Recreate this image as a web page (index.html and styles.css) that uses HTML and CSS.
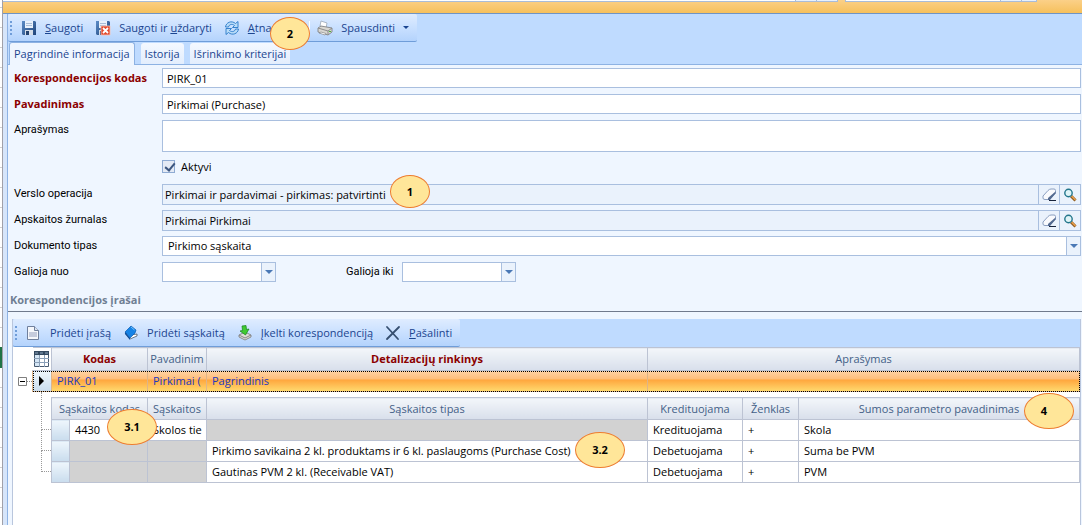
FILE: index.html
```html
<!DOCTYPE html>
<html lang="lt">
<head>
<meta charset="utf-8">
<title>Korespondencija</title>
<link rel="stylesheet" href="styles.css">
</head>
<body>
<svg class="defs" aria-hidden="true">
  <defs>
    <linearGradient id="steel" x1="0" y1="0" x2="1" y2="1"><stop offset="0" stop-color="#5b8cc8"/><stop offset="1" stop-color="#1f4378"/></linearGradient>
    <symbol id="floppy" viewBox="0 0 16 16">
      <path d="M1 1h13l1 1v13H2l-1-1z" fill="url(#steel)"/>
      <path d="M4 1h8v7H4z" fill="#e9f1fb"/><path d="M5 3.500h6M5 5.500h6" stroke="#a9bdd8"/>
      <path d="M4 10h8v5H4z" fill="#d5dde8"/><path d="M5 11h3v4H5z" fill="#24436f"/>
    </symbol>
    <symbol id="eraser" viewBox="0 0 14 14">
      <path d="M1 8 6 2.500Q7.500 1 9 1h3q1.500 0 1.500 1.500V5L7.500 11.500H3Q1 11.500 1 10z" fill="#f9fafd" stroke="#8b9fc0"/>
      <path d="M13.500 3.500v2L8 12H6V10z" fill="#536a90"/><path d="M7 12.500h7" stroke="#17233c"/>
    </symbol>
    <symbol id="lens" viewBox="0 0 14 14">
      <path d="m8 8 4.500 4.500" stroke="#8b5a20" stroke-width="3"/><path d="m8.500 8 4 4" stroke="#eda04a" stroke-width="1.500"/>
      <circle cx="5.500" cy="5" r="3.700" fill="#dff4f7" stroke="#23768b" stroke-width="1.400"/>
    </symbol>
    <symbol id="arrow" viewBox="0 0 8 4"><path d="M0 0h8L4 4z" fill="#4a78b5"/></symbol>
  </defs>
</svg>
<div class="sheet-edge"></div>
<main class="window">
  <div class="titlebar"><i class="piece first"></i><i class="piece second"></i></div>
  <div class="body">
    <header class="head">
      <div class="toolbar" role="toolbar">
        <span class="grip"></span>
        <button class="tool"><svg width="16" height="16"><use href="#floppy"/></svg><span><u>S</u>augoti</span></button>
        <button class="tool"><svg width="16" height="16" viewBox="0 0 16 16"><use href="#floppy"/><path d="M6 6h9v9H6z" fill="#e2492d" stroke="#f7c1b3" stroke-width=".8"/><path d="m8 8 5 5m0-5-5 5" stroke="#fff" stroke-width="1.800"/></svg><span>Saugoti ir <u>u</u>ždaryti</span></button>
        <button class="tool"><svg width="16" height="16" viewBox="0 0 16 16"><path d="M1.500 7C2 2.500 7.500 0 11.500 3.500L14 1.500V7.500H8.500l2-2C8 3.500 5 4.500 4.500 7z" fill="#b9dcf8" stroke="#2878c8" stroke-width=".9"/><path d="M14.500 9c-.5 4.500-6 7-10 3.500L2 14.500v-6h5.500l-2 2c2.500 2 5.500 1 6-1.500z" fill="#b9dcf8" stroke="#2878c8" stroke-width=".9"/></svg><span><u>A</u>tnaujinti</span></button>
        <span class="split"></span>
        <button class="tool"><svg width="16" height="16" viewBox="0 0 16 16"><path d="m4 1 6 2-1 5-6-2z" fill="#fff" stroke="#9aa7b8" stroke-width=".8"/><path d="M1 8 4 6l11 2v4l-4 3-10-3z" fill="#d9d7d2" stroke="#77797c" stroke-width=".8"/><path d="m1 8 10 3 4-3M11 11v4" fill="none" stroke="#8c8c8c"/><path d="m4 12 5 1.500-1 1.500-6-2z" fill="#fff" stroke="#777" stroke-width=".6"/><path d="M12 11.500h2" stroke="#47b53b"/></svg><span>Spausdinti</span><svg width="6" height="3" viewBox="0 0 6 3"><path d="M0 0h6L3 3z" fill="#1b4590"/></svg></button>
      </div>
      <nav class="tabs" role="tablist">
        <button class="tab active" role="tab" aria-selected="true">Pagrindinė informacija</button>
        <button class="tab" role="tab">Istorija</button>
        <button class="tab" role="tab">Išrinkimo kriterijai</button>
      </nav>
    </header>

    <form class="form">
      <label class="must" for="code">Korespondencijos kodas</label>
      <input class="box" id="code" value="PIRK_01">
      <label class="must" for="name">Pavadinimas</label>
      <input class="box" id="name" value="Pirkimai (Purchase)">
      <label for="desc">Aprašymas</label>
      <textarea class="box tall" id="desc"></textarea>
      <label class="check"><input type="checkbox" checked><span>Aktyvi</span></label>
      <label for="oper">Verslo operacija</label>
      <div class="combo lookup"><input id="oper" readonly value="Pirkimai ir pardavimai - pirkimas: patvirtinti"><button type="button" aria-label="Valyti"><svg width="14" height="14"><use href="#eraser"/></svg></button><button type="button" aria-label="Ieškoti"><svg width="14" height="14"><use href="#lens"/></svg></button></div>
      <label for="journal">Apskaitos žurnalas</label>
      <div class="combo lookup"><input id="journal" readonly value="Pirkimai Pirkimai"><button type="button" aria-label="Valyti"><svg width="14" height="14"><use href="#eraser"/></svg></button><button type="button" aria-label="Ieškoti"><svg width="14" height="14"><use href="#lens"/></svg></button></div>
      <label for="doc">Dokumento tipas</label>
      <div class="combo"><select id="doc"><option>Pirkimo sąskaita</option></select><span class="drop"><svg width="8" height="4"><use href="#arrow"/></svg></span></div>
      <label for="from">Galioja nuo</label>
      <div class="dates">
        <div class="combo date"><input id="from"><button type="button" class="drop" aria-label="Data nuo"><svg width="8" height="4"><use href="#arrow"/></svg></button></div>
        <label for="to">Galioja iki</label>
        <div class="combo date"><input id="to"><button type="button" class="drop" aria-label="Data iki"><svg width="8" height="4"><use href="#arrow"/></svg></button></div>
      </div>
    </form>

    <h2 class="section">Korespondencijos įrašai</h2>

    <section class="records">
      <div class="bar">
        <div class="toolbar" role="toolbar">
          <span class="grip"></span>
          <button class="tool"><svg width="16" height="16" viewBox="0 0 16 16"><path d="M1.500 1.500h7l4 4v9h-11z" fill="#f5f7fb" stroke="#6f7f9c"/><path d="M8.500 1.500v4h4" fill="#dce4f0" stroke="#6f7f9c"/><path d="M3 7h8v5H3z" fill="#c5cbdc"/></svg><span>Pridėti įrašą</span></button>
          <button class="tool"><svg width="16" height="16" viewBox="0 0 16 16"><path d="m2 8 5 6 7-3v-2l-6 1z" fill="#fff" stroke="#345" stroke-width=".7"/><path d="m2 7 6-6 5 4-1 3-5 5z" fill="#1683e6" stroke="#0a5bb2" stroke-width=".7"/><path d="m2 7 5 6v2L2 9z" fill="#0d4e9b"/><path d="m8 2 3.500 3" stroke="#72c2ff"/></svg><span>Pridėti sąskaitą</span></button>
          <button class="tool"><svg width="16" height="16" viewBox="0 0 16 16"><path d="m2 10 6-3 6 3v2l-6 3-6-3z" fill="#dcdcd8" stroke="#777" stroke-width=".8"/><path d="m2 10 6 3 6-3" fill="none" stroke="#888"/><path d="M5 1l4-.5.500 4L12 4 8.500 10 3 6l2.500-.5z" fill="#3fca32" stroke="#16831b" stroke-width=".7"/></svg><span>Įkelti korespondenciją</span></button>
          <button class="tool"><svg width="16" height="16" viewBox="0 0 16 16"><path d="m2 2 11 12M14 2 2 14" stroke="#364f70" stroke-width="1.800" stroke-linecap="round"/></svg><span><u>P</u>ašalinti</span></button>
        </div>
      </div>
      <div class="level">
        <div class="expander"><button aria-label="Sutraukti"><svg width="9" height="9" viewBox="0 0 9 9"><path d="M.5.500h8v8h-8z" fill="#fff" stroke="#7f7f7f"/><path d="M2 4.500h5" stroke="#000"/></svg></button><i></i></div>
        <table class="grid main">
          <colgroup><col class="w19"><col class="w96"><col class="w59"><col class="w441"><col></colgroup>
          <thead><tr>
            <th class="corner"><svg width="15" height="16" viewBox="0 0 15 16"><path d="M.5.500h14v15H.5z" fill="#fff" stroke="#47596f"/><path d="M1 4h4v11H1z" fill="#d5e6f5"/><path d="M0 7.500h15M0 11.500h15M5.500 4v12M10.500 4v12" stroke="#8ba0b8"/><path d="M0 0h15v4H0z" fill="#34495f"/><path d="M1 2h3m2 0h3m2 0h3" stroke="#8ea7bf"/></svg></th>
            <th class="must">Kodas</th><th>Pavadinim</th><th class="must">Detalizacijų rinkinys</th><th>Aprašymas</th>
          </tr></thead>
          <tbody><tr class="selected"><td class="handle"><svg width="5" height="10" viewBox="0 0 5 10"><path d="M0 0v10l5-5z"/></svg></td><td>PIRK_01</td><td>Pirkimai (</td><td>Pagrindinis</td><td></td></tr></tbody>
        </table>
      </div>
      <div class="level sub">
        <div class="tree"><i class="first"></i><i></i><i></i></div>
        <table class="grid">
          <colgroup><col class="w18"><col class="w78"><col class="w59"><col class="w441"><col class="w95"><col class="w56"><col></colgroup>
          <thead><tr><th colspan="2">Sąskaitos kodas</th><th>Sąskaitos</th><th>Sąskaitos tipas</th><th>Kredituojama</th><th>Ženklas</th><th>Sumos parametro pavadinimas</th></tr></thead>
          <tbody>
            <tr><td class="handle"></td><td>4430</td><td>Skolos tie</td><td class="off"></td><td>Kredituojama</td><td>+</td><td>Skola</td></tr>
            <tr><td class="handle"></td><td class="off"></td><td class="off"></td><td>Pirkimo savikaina 2 kl. produktams ir 6 kl. paslaugoms (Purchase Cost)</td><td>Debetuojama</td><td>+</td><td>Suma be PVM</td></tr>
            <tr><td class="handle"></td><td class="off"></td><td class="off"></td><td>Gautinas PVM 2 kl. (Receivable VAT)</td><td>Debetuojama</td><td>+</td><td>PVM</td></tr>
          </tbody>
        </table>
      </div>
    </section>
  </div>
</main>
<span class="note small n1">1</span>
<span class="note small n2">2</span>
<span class="note n31">3.1</span>
<span class="note n32">3.2</span>
<span class="note n4">4</span>
</body>
</html>
```
FILE: styles.css
```css
* { box-sizing: border-box; }
body {
  margin: 0;
  min-height: 100vh;
  display: flex;
  position: relative;
  font: 11px/16px "Open Sans", "Noto Sans", sans-serif;
  color: #000;
  background: #fff;
}
button, input, select, textarea { font: inherit; color: inherit; margin: 0; padding: 0; border: 0; border-radius: 0; background: none; }
svg { display: block; flex: none; }
.defs { position: absolute; width: 0; height: 0; }

.sheet-edge {
  width: 3px;
  border-right: 1px solid #a0a0a8;
  background: linear-gradient(#217346, #217346) 0 347px / 2px 21px no-repeat, repeating-linear-gradient(#fff 0 7px, #d0d0d0 7px 8px, #fff 8px 20px);
}
.window { flex: 1; min-width: 0; display: flex; flex-direction: column; background: #d6e5fa; }
.titlebar { display: flex; gap: 7px; height: 14px; padding-right: 45px; border-bottom: 1px solid #6f94c4; background: linear-gradient(#fbd088, #f6c05c); }
.piece { height: 2px; border-bottom: 1px solid #a9bcd8; border-right: 1px solid #a9bcd8; }
.piece.first { flex: 1; background: linear-gradient(to left, #e8f1fd 20px, #a9bcd8 20px 21px, #e8f1fd 21px 41px, #a9bcd8 41px 42px, #fff 42px); }
.piece.second { width: 192px; border-left: 1px solid #a9bcd8; background: linear-gradient(to left, #e8f1fd 14px, #a9bcd8 14px 15px, #e8f1fd 15px 35px, #a9bcd8 35px 36px, #fff 36px); }
.body { flex: 1; margin-left: 4px; border-left: 1px solid #8db2e3; display: flex; flex-direction: column; background: #eff6ff; }

.head { background: #bfdbff; border-bottom: 1px solid #8db2e3; }
.toolbar {
  display: flex;
  align-items: center;
  width: max-content;
  height: 28px;
  padding: 0 2px;
  border-bottom: 1px solid #6f9dd9;
  border-radius: 2px;
  background: linear-gradient(#dfecff, #c9e0ff 50%, #b4d3fc);
  color: #1b4590;
}
.grip { width: 2px; height: 14px; margin-right: 3px; background: repeating-linear-gradient(#6f9dd9 0 2px, transparent 2px 4px); }
.tool { display: flex; align-items: center; gap: 8px; height: 24px; padding: 0 6px; white-space: nowrap; }
.split { width: 1px; height: 14px; margin: 0 1px 0 6px; background: #fff; }
.tabs { display: flex; align-items: flex-end; gap: 6px; height: 22px; padding-left: 1px; }
.tab { height: 21px; padding: 0 4px; border-radius: 3px 3px 0 0; color: #1b4590; background: linear-gradient(#f4f8ff, #e3eefd); white-space: nowrap; }
.tab.active { height: 23px; margin-bottom: -1px; border: 1px solid #8db2e3; border-bottom: 0; background: #eff6ff; }

.form { display: grid; grid-template-columns: 148px minmax(0, 1fr); row-gap: 6px; padding: 3px 1px 0 6px; }
.form > label, .dates label { font-family: Roboto, "Liberation Sans", sans-serif; line-height: 20px; }
.form > .must { font-family: "Open Sans", sans-serif; font-weight: 700; }
.must { color: #8b0000; }
.box { width: 100%; height: 20px; padding: 0 4px; border: 1px solid #a9bfdf; background: #fff; }
.box.tall { display: block; height: 32px; resize: none; }
.form > .check { grid-column: 2; display: flex; align-items: center; gap: 6px; height: 20px; font-family: inherit; padding-bottom: 3px; }
.check input { appearance: none; width: 13px; height: 13px; border: 1px solid #8fabd3; background: #e4eaf5; position: relative; }
.check input::after { content: ""; position: absolute; left: 4px; top: 0; width: 4px; height: 8px; border: solid #3c567f; border-width: 0 2px 2px 0; transform: rotate(40deg); }
.combo { display: flex; height: 20px; border: 1px solid #a9bfdf; background: #fff; }
.combo input, .combo select { flex: 1; min-width: 0; appearance: none; padding: 0 5px; }
.combo button, .drop { display: flex; align-items: center; justify-content: center; width: 21px; border-left: 1px solid #a9bfdf; background: #eaf2fc; }
.combo .drop { width: 14px; }
.lookup { height: 21px; margin-bottom: -1px; background: #eaf2fc; }
.lookup input { padding: 0 2px; }
.dates { display: flex; align-items: center; }
.date { width: 114px; }
.dates label { width: 126px; padding-left: 70px; white-space: nowrap; }

.section { margin: 10px 0 0; padding: 0 2px 3px; border-bottom: 1px solid #707a8c; color: #6f7f93; font-size: 11px; line-height: 16px; }
.records { flex: 1; margin: 7px 1px 0 4px; border: solid #b9c6dd; border-width: 0 1px; background: #fff; }
.bar { background: #bfdbff; }
.level { display: flex; }
.grid { flex: 1; width: 100%; min-width: 0; table-layout: fixed; border-collapse: collapse; }
.grid th, .grid td { padding: 0 5px; border: 1px solid #bcc3d3; overflow: hidden; white-space: nowrap; text-align: left; font-weight: 400; }
.grid th { height: 22px; padding: 0 2px; text-align: center; color: #435f87; background: linear-gradient(#f3f6fa, #d8dfeb); }
.grid td { height: 21px; }
.grid th.must { font-weight: 700; color: #8b0000; }
.main th { height: 23px; }
.main th.corner { padding: 0 1px; border-left: 0; background: #fff; }
.grid .handle { padding: 0 0 0 6px; background: linear-gradient(#eef6fc, #c9dced); }
.off { background: #d2d2d2; }
.selected { outline: 1px dotted #000; outline-offset: -1px; color: #2038c0; background: linear-gradient(#ffd3a5, #ffbd78 40%, #ffa53c 41%, #ffdd72); }
.grid .selected td { padding-right: 0; border-color: #ddb58a; }
.expander { display: flex; flex: none; width: 19px; height: 21px; margin-top: 24px; align-items: center; padding-left: 5px; }
.expander i { flex: 1; border-top: 1px dotted #888; }
.sub { margin-top: 5px; }
.tree { flex: none; width: 38px; padding-left: 28px; margin-top: -5px; }
.tree i { display: block; height: 21px; border: dotted #999; border-width: 0 0 1px 1px; }
.tree .first { height: 38px; }
.w18 { width: 18px; } .w19 { width: 19px; } .w56 { width: 56px; } .w59 { width: 59px; }
.w78 { width: 78px; } .w95 { width: 95px; } .w96 { width: 96px; } .w441 { width: 441px; }

.note {
  position: absolute;
  display: flex;
  align-items: center;
  justify-content: center;
  width: 50px;
  height: 36px;
  border: 1px solid #ed7d31;
  border-radius: 50%;
  background: #ffe699;
  font: 700 11px/16px "Open Sans", sans-serif;
}
.small { width: 40px; height: 33px; }
.n1 { left: 390px; top: 175px; }
.n2 { left: 270px; top: 17px; }
.n31 { left: 107px; top: 409px; }
.n32 { left: 575px; top: 432px; }
.n4 { right: 8px; top: 393px; padding-right: 10px; }
```
